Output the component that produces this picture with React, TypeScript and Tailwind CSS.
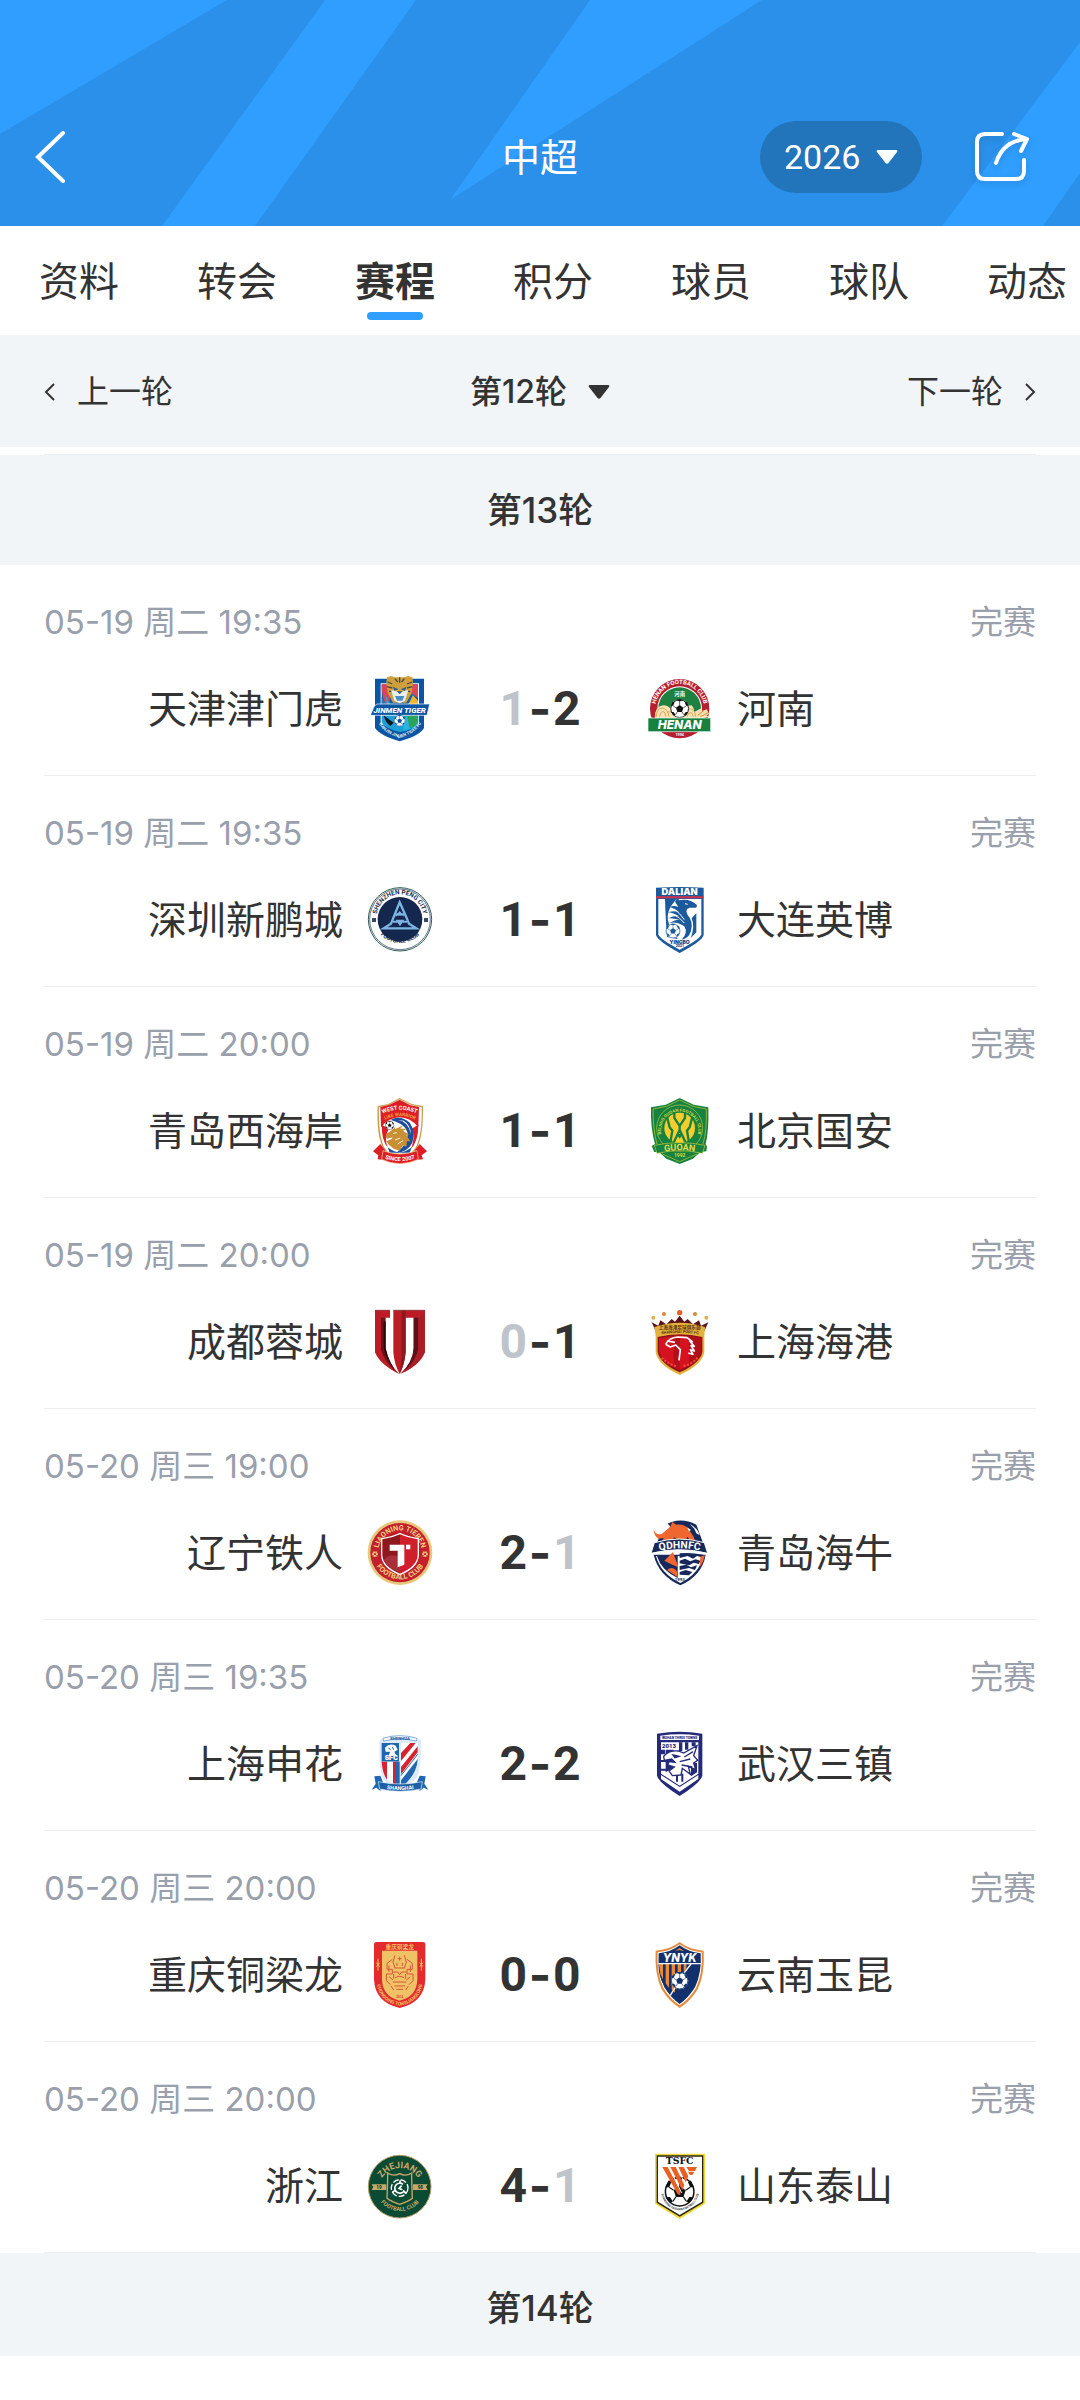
import React, { useId } from "react";

interface Match {
  id: number;
  date: string;
  status: string;
  home: string;
  away: string;
  homeScore: number;
  awayScore: number;
  homeCrest: React.ReactNode;
  awayCrest: React.ReactNode;
}

interface CrestProps {
  children: React.ReactNode;
}

interface ArcTextProps {
  d: string;
  size: number;
  fill: string;
  children: string;
}

const FONT = "font-['Inter','Noto_Sans_CJK_SC',sans-serif]";

/* ---------- crest helpers ---------- */

const Crest: React.FC<CrestProps> = ({ children }) => (
  <svg className="w-[66px] h-[66px] shrink-0" viewBox="0 0 198 198" aria-hidden="true">
    {children}
  </svg>
);

const ArcText: React.FC<ArcTextProps> = ({ d, size, fill, children }) => {
  const id = useId();
  return (
    <>
      <path id={id} d={d} fill="none" />
      <text fontSize={size} fill={fill} fontFamily="Roboto, sans-serif" fontWeight="700" textAnchor="middle">
        <textPath href={`#${id}`} startOffset="50%">
          {children}
        </textPath>
      </text>
    </>
  );
};

const Ball: React.FC<{ x: number; y: number; r: number; color?: string; base?: string }> = ({
  x,
  y,
  r,
  color = "#111",
  base = "#fff",
}) => (
  <g transform={`translate(${x} ${y}) scale(${r / 20})`}>
    <circle r="20" fill={base} />
    <circle r="19" fill="none" stroke={color} strokeWidth="2" />
    <path
      d="M0-8 8-2 5 7H-5L-8-2ZM-7-19 0-15 7-19 0-20ZM19-6 14-6 11-13 15-15ZM-19-6-14-6-11-13-15-15ZM13 15 9 13 13 7 18 7ZM-13 15-9 13-13 7-18 7Z"
      fill={color}
    />
    <path d="M0-8V-15M8-2 14-6M5 7 9 13M-5 7-9 13M-8-2-14-6" stroke={color} strokeWidth="1.5" />
  </g>
);

/* ---------- crests ---------- */

const TianjinCrest = () => (
  <Crest>
    <path d="M24 8H171V156Q160 178 98 196 38 178 24 156Z" fill="#0a56a5" />
    <path d="M41 22H156V146H41Z" fill="#fff" />
    <path d="M44 25H153V90H44Z" fill="#0f5fae" />
    <path d="M44 25H74L66 88H58Q44 70 44 25Z" fill="#d8455a" />
    <path d="M134 25H153V66L134 52Z" fill="#e0455a" />
    <path d="M54 44Q60 80 80 90H116Q136 76 138 48V90H60Z" fill="#2aa4de" />
    <path d="M138 58 153 74V90H122Z" fill="#f3b529" />
    <path d="M44 62 60 90H44Z" fill="#2473bb" />
    <path d="M44 118H154V148Q126 165 98 168 62 160 44 142Z" fill="#1ba0d8" />
    <path d="M50 118 80 140 70 150Q56 142 50 118Z" fill="#101820" />
    <path d="M112 118H153V146L116 162Z" fill="#2aa45d" />
    <path d="M120 118 128 158 112 164 104 140Z" fill="#25b4e4" />
    <path d="M60 4 72 0 84 4H112L124 0 136 4 138 18 134 52 118 80H78L62 50 58 18Z" fill="#cf9f3c" />
    <path
      d="M62 18 76 24M60 32 76 36M66 46 78 46M136 18 120 24M136 32 120 36M130 46 118 46M84 8 92 18M112 8 104 18M98 4V20"
      stroke="#4b4a3a"
      strokeWidth="4"
    />
    <path d="M72 42 88 46 98 54 108 46 124 42 114 74 98 82 82 74Z" fill="#e8f0f5" />
    <path d="M78 32 94 40 82 44ZM118 32 102 40 114 44ZM90 46H106L98 54Z" fill="#1f5fa4" />
    <path d="M84 60H112L106 74H90Z" fill="#4a8cc8" />
    <path d="M22 90 30 84H188L180 118H10Z" fill="#0a56a5" stroke="#fff" strokeWidth="2" />
    <text
      x="98"
      y="110"
      textAnchor="middle"
      fontFamily="Roboto, sans-serif"
      fontSize="24"
      fontWeight="800"
      fontStyle="italic"
      fill="#fff"
    >
      JINMEN TIGER
    </text>
    <Ball x={98} y={134} r={17} color="#0d4f92" />
    <ArcText d="M30 130Q40 168 98 186 156 168 168 130" size={13} fill="#dbe9f6">
      TIANJIN JINMEN TIGER FC
    </ArcText>
  </Crest>
);

const HenanCrest = () => (
  <Crest>
    <circle cx="98" cy="98" r="89" fill="#b5202f" />
    <circle cx="98" cy="98" r="67" fill="#fff" />
    <circle cx="98" cy="98" r="64" fill="#1d8240" />
    <ArcText d="M27 114A73 73 0 1 1 169 114" size={18} fill="#fff">
      HENAN FOOTBALL CLUB
    </ArcText>
    <text
      x="98"
      y="61"
      textAnchor="middle"
      fontFamily="'Noto Sans CJK SC', sans-serif"
      fontSize="16"
      fontWeight="700"
      fill="#fff"
    >
      河南
    </text>
    <path
      d="M24 126Q22 92 48 88 66 88 74 104 90 96 98 126ZM98 126Q104 88 134 88 142 96 142 108L164 96 162 106 180 100 184 112 192 108 178 120H190L172 126Z"
      fill="#f6e2b4"
    />
    <g fill="none" stroke="#d9a850" strokeWidth="3">
      <path d="M28 122Q28 98 46 96 62 98 66 122M38 122Q38 108 48 106 56 108 56 122M62 108Q80 104 86 122" />
      <path d="M108 122Q112 100 130 98 144 102 146 122M120 122Q122 110 132 110 138 112 138 122" />
      <path d="M152 118 170 104M160 122 184 110" stroke="#e58a2e" />
    </g>
    <Ball x={98} y={98} r={28} />
    <path d="M3 126H191V167H3Z" fill="#17803f" stroke="#fff" strokeWidth="2" />
    <text
      x="98"
      y="158"
      textAnchor="middle"
      fontFamily="Inter, sans-serif"
      fontSize="36"
      fontWeight="800"
      fontStyle="italic"
      fill="#fff"
    >
      HENAN
    </text>
    <text x="98" y="181" textAnchor="middle" fontFamily="Roboto, sans-serif" fontSize="11" fontWeight="700" fill="#fff">
      1994
    </text>
  </Crest>
);

const ShenzhenCrest = () => (
  <Crest>
    <circle cx="99" cy="97" r="95" fill="#fff" stroke="#2f5f55" strokeWidth="3" />
    <circle cx="99" cy="97" r="91" fill="none" stroke="#1a2d55" strokeWidth="2" />
    <circle cx="99" cy="97" r="67" fill="#14284f" />
    <ArcText d="M32 112A70 70 0 1 1 166 112" size={19} fill="#1a2d4f">
      SHENZHEN PENG CITY
    </ArcText>
    <ArcText d="M26 124A83 83 0 0 0 172 124" size={17} fill="#1a2d4f">
      FOOTBALL CLUB
    </ArcText>
    <path d="M15 93H27V105H15ZM171 93H183V105H171Z" fill="#3a4768" />
    <g fill="none" stroke="#7db4e2" strokeWidth="7">
      <path d="M76 100 98 46 122 100M76 100 72 110 50 124H148L126 110 122 100" />
      <path d="M84 82H112M78 104H92M106 104H120" strokeWidth="6" />
    </g>
    <path d="M84 88 98 72 112 88ZM86 98H112L99 118Z" fill="#7db4e2" />
    <path d="M90 88H108" stroke="#14284f" strokeWidth="4" />
  </Crest>
);

const DalianCrest = () => (
  <Crest>
    <path d="M27 2Q98-2 170 2V144Q166 162 98 198 32 162 27 144Z" fill="#1b5a9c" />
    <path d="M34 36H163V142Q158 158 98 188 40 158 34 142Z" fill="#fff" />
    <text
      x="98"
      y="24"
      textAnchor="middle"
      fontFamily="Inter, sans-serif"
      fontSize="28"
      fontWeight="900"
      fill="#fff"
    >
      DALIAN
    </text>
    <path d="M27 28H170V34H27Z" fill="#d6314a" />
    <path d="M54 36H88L70 60Q56 90 66 112 82 136 92 156L60 150Q56 100 54 36Z" fill="#1b5a9c" />
    <path
      d="M84 44 92 30 96 40Q128 34 150 54L148 62 128 62Q112 66 122 84 140 104 132 132 124 156 104 158 124 138 112 118 90 102 66 108 84 98 98 98 74 92 64 94 84 84 96 88 76 76 62 76 84 70 96 76 80 62 66 60 82 54 94 60Z"
      fill="#1b5a9c"
    />
    <path d="M114 50 122 52M82 66Q98 78 112 98M78 82Q98 90 112 108" stroke="#fff" strokeWidth="3" fill="none" />
    <path d="M148 78V136L132 152Q144 116 134 94Z" fill="#1b5a9c" />
    <Ball x={78} y={132} r={22} color="#1b5a9c" />
    <text x="98" y="170" textAnchor="middle" fontFamily="Inter, sans-serif" fontSize="15" fontWeight="900" fill="#1b3f7c">
      YINGBO
    </text>
    <text x="98" y="181" textAnchor="middle" fontFamily="Inter, sans-serif" fontSize="10" fontWeight="800" fill="#1b3f7c">
      2021
    </text>
  </Crest>
);

const WestCoastCrest = () => (
  <Crest>
    <path d="M98 0 134 18 168 24Q170 110 150 150 130 180 98 190 66 180 48 150 28 110 32 24L64 18Z" fill="#c9a04a" />
    <path d="M98 4 132 21 164 28Q166 108 147 147 128 175 98 185 68 175 51 147 34 108 36 28L66 21Z" fill="#fff" />
    <path d="M98 5 130 22 156 27 154 88Q130 58 98 58 66 58 42 88L40 27 66 21Z" fill="#dc1f26" />
    <ArcText d="M44 48Q98 22 152 48" size={17} fill="#fff">
      WEST COAST
    </ArcText>
    <ArcText d="M42 72Q98 36 156 72" size={14} fill="#f0a13a">
      LIKE WARRIOR
    </ArcText>
    <path d="M44 80Q44 128 62 148 50 118 66 92ZM154 80Q154 130 132 152 146 116 134 92Z" fill="#dc1f26" />
    <path d="M70 66Q100 50 128 74 146 98 136 134 122 162 88 164 122 140 122 108 118 78 70 66Z" fill="#1d4f9d" />
    <path d="M92 66Q124 70 132 108 130 80 110 68Z" fill="#fff" />
    <Ball x={68} y={82} r={13} />
    <path
      d="M58 108 72 98 86 86 84 94 108 82 100 92 120 92 108 98 126 110 118 112 130 130 120 130 118 146 108 142 98 158 80 152Q62 140 58 130L72 124 78 118 60 122 56 116Z"
      fill="#c98f35"
    />
    <path d="M78 106 90 104M84 126 100 120M92 138 108 128" stroke="#fff3d0" strokeWidth="3" />
    <path d="M62 148Q98 178 134 148L128 164H68Z" fill="#1d4f9d" />
    <path d="M18 160 40 138 54 156V186L32 184 34 172ZM180 160 158 138 144 156V186L168 184 164 172Z" fill="#dc1f26" />
    <path d="M48 158Q98 178 150 158L154 184Q98 210 44 184Z" fill="#dc1f26" stroke="#f5d6a0" strokeWidth="2" />
    <ArcText d="M48 180Q98 198 150 180" size={17} fill="#fff">
      SINCE 2007
    </ArcText>
  </Crest>
);

const GuoanCrest = () => (
  <Crest>
    <path
      d="M98 0 140 20 184 28Q186 100 176 138L180 146 178 160 160 162 138 182 98 198 58 182 36 162 22 162 14 144 24 138Q10 90 12 28L56 20Z"
      fill="#16823f"
    />
    <path
      d="M98 6 138 25 178 33Q180 96 168 138M98 6 58 25 18 33Q18 96 30 138M46 168 98 191 150 168"
      fill="none"
      stroke="#c9cf3a"
      strokeWidth="2"
    />
    <circle cx="98" cy="90" r="69" fill="none" stroke="#b9c840" strokeWidth="2" />
    <ArcText d="M44 112A56 56 0 1 1 152 112" size={13} fill="#d5d73a">
      BEIJING GUOAN FOOTBALL CLUB
    </ArcText>
    <circle cx="98" cy="90" r="46" fill="#f6cd2c" />
    <g fill="none" stroke="#16823f" strokeWidth="7">
      <path d="M82 42V60L98 84 114 60V42M98 84V96M98 96 78 138M98 96 118 138" />
      <path d="M60 56 68 88 76 98 70 134M136 56 128 88 120 98 126 134" />
    </g>
    <path d="M88 108H108L98 122Z" fill="#16823f" />
    <path d="M22 142Q98 126 174 142L166 166Q98 150 30 166Z" fill="#16823f" stroke="#c9cf3a" strokeWidth="2" />
    <ArcText d="M34 164Q98 150 162 164" size={27} fill="#e3df4a">
      GUOAN
    </ArcText>
    <text x="98" y="178" textAnchor="middle" fontFamily="Roboto, sans-serif" fontSize="15" fontWeight="700" fill="#d5d73a">
      1992
    </text>
  </Crest>
);

const ChengduCrest = () => (
  <Crest>
    <path d="M24 4H69V26H54V120Q64 164 96 195 38 166 24 130Z" fill="#bb1c26" />
    <path d="M42 26H56V118Q66 166 96 195 54 164 42 122Z" fill="#6c1318" />
    <path d="M50 40 56 36V118Q64 158 86 184 56 150 50 118Z" fill="#2c0a0b" />
    <path d="M79 4H174V130Q160 168 100 195 138 160 140 118V26H116V130Q112 170 98 195 82 168 79 130Z" fill="#bb1c26" />
    <path d="M104 4H116V130Q112 170 98 195 104 160 104 130Z" fill="#8e1820" />
    <path d="M140 26H154V122Q144 162 100 195 138 160 140 118Z" fill="#5c1116" />
    <path d="M154 26 172 8V130Q160 164 112 190 146 158 154 122Z" fill="#a81d26" />
    <path d="M24 4H69M79 4H174" stroke="#8c3a3e" strokeWidth="3" />
  </Crest>
);

const ShanghaiPortCrest = () => (
  <Crest>
    <circle cx="98" cy="11" r="8" fill="#e2602f" />
    <circle cx="51" cy="15" r="6" fill="#d9853a" />
    <circle cx="144" cy="15" r="6" fill="#d9853a" />
    <circle cx="19" cy="26" r="6" fill="#d8b34c" />
    <circle cx="178" cy="26" r="6" fill="#d8b34c" />
    <path
      d="M14 40 34 50 40 34 58 46 74 30 84 38 98 20 112 38 122 30 138 46 156 34 162 50 184 40 172 66H26Z"
      fill="#5a1218"
    />
    <path d="M22 54Q98 28 174 54L172 80V130Q166 168 98 198 32 168 26 130V80Z" fill="#e2b23d" />
    <path d="M32 84Q98 68 166 84V128Q160 162 98 190 38 162 32 128Z" fill="#8d0f18" />
    <path d="M36 88Q98 72 162 88V126Q156 158 98 184 42 158 36 126Z" fill="#d5121f" />
    <path d="M80 78H98V184L80 176ZM126 80 162 88V126Q158 148 126 170Z" fill="#b30f1b" />
    <text
      x="98"
      y="60"
      textAnchor="middle"
      fontFamily="'Noto Sans CJK SC', sans-serif"
      fontSize="14"
      fontWeight="700"
      fill="#5a2a12"
    >
      上海海港足球俱乐部
    </text>
    <ArcText d="M30 78Q98 66 168 78" size={12} fill="#5a2a12">
      SHANGHAI PORT FC
    </ArcText>
    <path
      d="M56 106Q66 86 92 84L120 86 136 98 128 96 142 112 132 110 142 126 130 122 138 136 124 132M56 106 70 114 86 108 100 122 96 154M60 96 84 100"
      fill="none"
      stroke="#fff"
      strokeWidth="5"
      strokeLinejoin="round"
    />
    <path d="M44 146Q62 166 90 172M152 146Q136 166 106 172" stroke="#f0453a" strokeWidth="6" strokeDasharray="7 4" fill="none" />
  </Crest>
);

const LiaoningCrest = () => (
  <Crest>
    <circle cx="99" cy="98" r="97" fill="#e8c67c" />
    <circle cx="99" cy="98" r="89" fill="#c3202b" />
    <circle cx="99" cy="98" r="61" fill="#b91c26" />
    <ArcText d="M36 112A65 65 0 1 1 162 112" size={22} fill="#f2cf85">
      LIAONING TIEREN
    </ArcText>
    <ArcText d="M20 118A82 82 0 0 0 178 118" size={22} fill="#f2cf85">
      FOOTBALL CLUB
    </ArcText>
    <Ball x={24} y={102} r={9} color="#c3202b" base="#f2cf85" />
    <Ball x={174} y={102} r={9} color="#c3202b" base="#f2cf85" />
    <path d="M99 38Q122 50 156 54V106Q154 144 99 166 44 144 42 106V54Q76 50 99 38Z" fill="#fff" />
    <path d="M99 43Q122 54 152 58V106Q150 140 99 161Z" fill="#cf1f2a" />
    <path d="M99 43Q76 54 46 58V106Q48 140 99 161Z" fill="#8e1820" />
    <path d="M50 120Q70 96 99 112V158Q60 144 50 120Z" fill="#a8303a" />
    <path d="M68 74H112V134L92 142V92H68ZM117 74H130V88H117Z" fill="#fff" />
  </Crest>
);

const HainiuCrest = () => (
  <Crest>
    <path d="M52 16Q98-12 148 14L168 68H30Z" fill="#16295a" />
    <path d="M34 30 60 8 70 20 60 36 40 50Z" fill="#fff" />
    <path
      d="M20 26Q24 46 44 42L70 20 76 6 88 14Q112 12 124 26L140 50 146 68H132L122 50 112 66H96L84 52 66 66H44L50 54 34 56Q20 46 20 26Z"
      fill="#f0662f"
    />
    <path d="M128 12Q152 24 158 46L148 40 142 26ZM120 22 132 30 126 34Z" fill="#fff" />
    <path d="M20 104H176Q166 166 100 196 34 166 20 104Z" fill="#16295a" />
    <path d="M27 108H169Q158 160 100 189 40 160 27 108Z" fill="#fff" />
    <path d="M30 108H92V174Q42 150 30 108Z" fill="#16295a" />
    <path d="M52 122 78 96 94 142 76 134ZM60 150Q76 136 90 154V170Z" fill="#f0662f" />
    <path
      d="M98 100Q130 96 168 104L164 112 150 108 138 116 122 108 98 114ZM98 122 114 116 130 124 146 118 160 122 156 132 140 128 126 136 98 130ZM98 138 118 134 132 142 150 136 144 150 126 144 98 150ZM98 156 116 150 136 156 126 166 98 164Z"
      fill="#16295a"
    />
    <path d="M160 110 174 106Q170 126 158 142Z" fill="#f0662f" />
    <path d="M22 68Q98 46 172 68L182 100Q98 78 12 100Z" fill="#16295a" stroke="#fff" strokeWidth="3" />
    <ArcText d="M20 96Q98 74 176 96" size={31} fill="#fff">
      QDHNFC
    </ArcText>
    <text x="98" y="182" textAnchor="middle" fontFamily="Roboto, sans-serif" fontSize="13" fontWeight="700" fill="#16295a">
      1993
    </text>
  </Crest>
);

const ShenhuaCrest = () => (
  <Crest>
    <path d="M38 28Q60 12 98 14 138 12 162 28 164 110 148 140 130 164 98 176 62 164 46 140 34 100 38 28Z" fill="#dcebf6" />
    <path d="M48 22Q98 6 150 22L148 30Q98 18 50 30Z" fill="#fff" stroke="#4d8fc8" strokeWidth="2" />
    <text x="99" y="27" textAnchor="middle" fontFamily="Roboto, sans-serif" fontSize="13" fontWeight="900" fill="#1d5fa8">
      SHENHUA
    </text>
    <path d="M44 36H96V92H44Z" fill="#2166b0" />
    <path d="M44 92H96V170Q48 152 44 92Z" fill="#fff" />
    <path d="M44 92H60V146Q46 126 44 92ZM78 92H96V170L78 160Z" fill="#d8232e" />
    <path d="M84 92H98V172L84 166Z" fill="#2166b0" />
    <path d="M102 36H152V70Q152 132 102 170Z" fill="#fff" />
    <path d="M102 66 130 36H146L102 90ZM102 108 152 46V64L102 130Z" fill="#d8232e" />
    <path d="M102 148 152 84Q150 132 102 170Z" fill="#2166b0" />
    <path d="M102 134 152 70" stroke="#2166b0" strokeWidth="3" />
    <path d="M54 50Q68 34 86 44L92 56 82 62 88 74H64L70 62 56 62Z" fill="#fff" />
    <path d="M64 50 72 58M76 48 80 56" stroke="#2166b0" strokeWidth="3" />
    <text x="73" y="88" textAnchor="middle" fontFamily="Inter, sans-serif" fontSize="20" fontWeight="900" fill="#fff">
      SFC
    </text>
    <path d="M22 136 40 134 48 154 40 180 28 170 14 176 26 158ZM176 136 158 134 150 154 158 180 170 170 184 176 172 158Z" fill="#2166b0" />
    <path d="M34 152Q98 166 166 152L162 174Q98 188 38 174Z" fill="#1d5fa8" stroke="#e3effa" strokeWidth="2" />
    <ArcText d="M40 170Q98 184 160 170" size={16} fill="#fff">
      SHANGHAI
    </ArcText>
  </Crest>
);

const WuhanCrest = () => (
  <Crest>
    <path d="M30 8Q98-4 166 8V134Q160 156 98 195 36 156 30 134Z" fill="#252a78" />
    <path d="M40 14Q98 6 156 14V27H40Z" fill="#fff" />
    <text x="98" y="24" textAnchor="middle" fontFamily="Roboto, sans-serif" fontSize="10" fontWeight="900" fill="#252a78">
      WUHAN THREE TOWNS
    </text>
    <path d="M42 34H154V128L98 164 42 128Z" fill="#fff" />
    <path d="M42 56H54V70H42ZM56 56H80V110L56 124ZM96 34H106V60H96ZM114 34H124V56H114ZM134 34H146V46H134ZM132 96H150V124L132 136Z" fill="#252a78" />
    <path d="M42 90H60M42 116H60M90 128V152M106 128V152" stroke="#252a78" strokeWidth="6" />
    <path
      d="M50 76Q64 58 94 60L110 66 150 44 140 74 152 88 140 96 146 116 124 106 130 130 106 112 102 132 76 134 66 120 82 108 62 102 66 92 84 94 74 84 52 88Z"
      fill="#fff"
      stroke="#252a78"
      strokeWidth="4"
    />
    <path d="M78 72 96 76 84 80ZM98 92 130 84M104 102 136 108M112 78 138 62" stroke="#252a78" strokeWidth="4" fill="#252a78" />
    <path d="M42 132 98 168 154 132V144L98 182 42 144Z" fill="#fff" />
    <text x="66" y="51" textAnchor="middle" fontFamily="Roboto, sans-serif" fontSize="18" fontWeight="900" fill="#252a78">
      2013
    </text>
  </Crest>
);

const ChongqingCrest = () => (
  <Crest>
    <path d="M28 0H168Q175 0 175 8V112Q172 182 98 198 24 182 21 112V8Q21 0 28 0Z" fill="#e32b2e" />
    <path d="M45 26H151V112Q150 164 98 176 46 164 45 112Z" fill="#f1c265" />
    <text
      x="98"
      y="20"
      textAnchor="middle"
      fontFamily="'Noto Sans CJK SC', sans-serif"
      fontSize="17"
      fontWeight="700"
      fill="#f1c265"
    >
      重庆铜梁龙
    </text>
    <ArcText d="M28 112Q32 180 98 191 164 180 168 112" size={14} fill="#f1c265">
      CHONGQING TONGLIANGLONG
    </ArcText>
    <path d="M33 50V86M28 62 38 74M38 62 28 74M163 50V86M158 62 168 74M168 62 158 74" stroke="#f1c265" strokeWidth="3" />
    <g fill="none" stroke="#d4573a" strokeWidth="3">
      <path d="M84 40 78 60 84 78M112 40 118 60 112 78M98 44V56M92 50H104M76 52 60 64V82H76V96H58V116L70 128M120 52 136 64V82H120V96H138V116L126 128" />
      <path d="M82 78H114M78 90H92L98 98 104 90H118M84 108Q98 98 112 108M78 120H118M82 132H114M88 142H108M80 96V110M116 96V110" />
      <path d="M66 104 78 114M130 104 118 114M72 132 80 144M124 132 116 144M66 70V90M130 70V90M90 62V72M106 62V72" />
    </g>
    <text x="98" y="168" textAnchor="middle" fontFamily="Roboto, sans-serif" fontSize="9" fontWeight="700" fill="#cf4a34">
      2014
    </text>
  </Crest>
);

const YunnanCrest = () => (
  <Crest>
    <path d="M98 0Q124 22 170 26 174 96 152 142 130 178 98 198 66 178 44 142 22 96 26 26 72 22 98 0Z" fill="#e58a3a" />
    <path d="M98 7Q124 27 164 31 168 94 147 138 126 172 98 190 70 172 49 138 28 94 32 31 72 27 98 7Z" fill="#fff" />
    <path d="M98 10Q124 30 161 34 165 92 144 136 124 168 98 186 72 168 52 136 31 92 35 34 72 30 98 10Z" fill="#12306c" />
    <path d="M84 26 98 18 112 28 98 24Z" fill="#e58a3a" />
    <path d="M35 66H132L120 84 84 158 72 154Q32 116 35 66Z" fill="#12306c" />
    <path d="M36 66H48V112L40 96ZM56 66H66V138L56 124ZM74 66H84V152L74 142ZM92 66H102V92L92 96ZM110 66H118V80L110 90Z" fill="#ea8a35" />
    <path d="M34 65H162M132 66 112 92M86 134 70 160" stroke="#fff" strokeWidth="4" />
    <Ball x={98} y={116} r={26} color="#12306c" />
    <text
      x="98"
      y="60"
      textAnchor="middle"
      fontFamily="Inter, sans-serif"
      fontSize="34"
      fontWeight="800"
      fontStyle="italic"
      fill="#fff"
    >
      YNYK
    </text>
  </Crest>
);

const ZhejiangCrest = () => (
  <Crest>
    <circle cx="98" cy="101" r="94" fill="#0b4a33" stroke="#b59a62" strokeWidth="3" />
    <ArcText d="M42 80A64 64 0 0 1 156 80" size={27} fill="#c9a86a">
      ZHEJIANG
    </ArcText>
    <ArcText d="M32 134A76 76 0 0 0 166 134" size={17} fill="#c9a86a">
      FOOTBALL CLUB
    </ArcText>
    <path d="M14 94H58V111H14L19 102ZM182 94H138V111H182L177 102Z" fill="#c9a86a" />
    <text x="36" y="108" textAnchor="middle" fontFamily="Roboto, sans-serif" fontSize="14" fontWeight="900" fill="#0b4a33">
      19
    </text>
    <text x="160" y="108" textAnchor="middle" fontFamily="Roboto, sans-serif" fontSize="14" fontWeight="900" fill="#0b4a33">
      98
    </text>
    <path
      d="M62 60Q80 72 98 62 116 72 134 60 134 100 136 136 124 146 98 154 72 146 60 136 62 100 62 60Z"
      fill="#0b4a33"
      stroke="#c9a86a"
      strokeWidth="4"
    />
    <circle cx="98" cy="105" r="25" fill="none" stroke="#fff" strokeWidth="4" strokeDasharray="18 6" />
    <path d="M108 94A15 15 0 1 0 112 112M104 98 96 106 106 110M98 90 100 82M84 112 76 118M112 116 118 122" stroke="#fff" strokeWidth="5" fill="none" />
  </Crest>
);

const ShandongCrest = () => (
  <Crest>
    <path d="M24 2H174V152L98 198 24 152Z" fill="#f0da35" />
    <path d="M29 7H169V149L98 191 29 149Z" fill="#2a2416" />
    <path d="M33 11H165V146L98 186 33 146Z" fill="#fff" />
    <text
      x="98"
      y="34"
      textAnchor="middle"
      fontFamily="'DejaVu Serif', serif"
      fontSize="28"
      fontWeight="700"
      fill="#111"
    >
      TSFC
    </text>
    <Ball x={98} y={116} r={45} />
    <path
      d="M46 42H62L100 114V126L92 124ZM70 42H86L112 96 106 112ZM94 42H110L124 70 116 88ZM118 42H150L144 54H126ZM122 56H142L136 66H128Z"
      fill="#ea5f24"
    />
    <path d="M66 42 104 120M90 42 114 92M114 42 130 72" stroke="#fff" strokeWidth="3" />
    <ArcText d="M40 112Q50 168 98 172 146 168 158 112" size={9} fill="#333">
      SHANDONG TAISHAN FOOTBALL CLUB
    </ArcText>
  </Crest>
);

/* ---------- data ---------- */

const tabs = ["资料", "转会", "赛程", "积分", "球员", "球队", "动态"];
const seasons = ["2026", "2025", "2024"];
const rounds = Array.from({ length: 30 }, (_, i) => i + 1);

const matches: Match[] = [
  { id: 1, date: "05-19 周二 19:35", status: "完赛", home: "天津津门虎", away: "河南", homeScore: 1, awayScore: 2, homeCrest: <TianjinCrest />, awayCrest: <HenanCrest /> },
  { id: 2, date: "05-19 周二 19:35", status: "完赛", home: "深圳新鹏城", away: "大连英博", homeScore: 1, awayScore: 1, homeCrest: <ShenzhenCrest />, awayCrest: <DalianCrest /> },
  { id: 3, date: "05-19 周二 20:00", status: "完赛", home: "青岛西海岸", away: "北京国安", homeScore: 1, awayScore: 1, homeCrest: <WestCoastCrest />, awayCrest: <GuoanCrest /> },
  { id: 4, date: "05-19 周二 20:00", status: "完赛", home: "成都蓉城", away: "上海海港", homeScore: 0, awayScore: 1, homeCrest: <ChengduCrest />, awayCrest: <ShanghaiPortCrest /> },
  { id: 5, date: "05-20 周三 19:00", status: "完赛", home: "辽宁铁人", away: "青岛海牛", homeScore: 2, awayScore: 1, homeCrest: <LiaoningCrest />, awayCrest: <HainiuCrest /> },
  { id: 6, date: "05-20 周三 19:35", status: "完赛", home: "上海申花", away: "武汉三镇", homeScore: 2, awayScore: 2, homeCrest: <ShenhuaCrest />, awayCrest: <WuhanCrest /> },
  { id: 7, date: "05-20 周三 20:00", status: "完赛", home: "重庆铜梁龙", away: "云南玉昆", homeScore: 0, awayScore: 0, homeCrest: <ChongqingCrest />, awayCrest: <YunnanCrest /> },
  { id: 8, date: "05-20 周三 20:00", status: "完赛", home: "浙江", away: "山东泰山", homeScore: 4, awayScore: 1, homeCrest: <ZhejiangCrest />, awayCrest: <ShandongCrest /> },
];

/* ---------- page parts ---------- */

const Caret: React.FC<{ className?: string }> = ({ className = "" }) => (
  <svg className={`w-[22px] h-[14px] ${className}`} viewBox="0 0 22 14" fill="currentColor" aria-hidden="true">
    <path d="M2 0H20Q22 0 21 2L12.500 13Q11 14.500 9.500 13L1 2Q0 0 2 0Z" />
  </svg>
);

const Header = () => (
  <header className="relative bg-[#2b90ea] pt-[88px] overflow-hidden text-white">
    <svg
      className="absolute inset-0 w-full h-full"
      viewBox="0 0 1080 226"
      preserveAspectRatio="none"
      fill="#2f9eff"
      aria-hidden="true"
    >
      <path d="M0 0H227L0 134ZM325 0H416L255 226H162ZM590 0H762L450 200ZM1080 42V173L1043 226H942Z" />
    </svg>
    <div className="relative grid grid-cols-[1fr_auto_1fr] items-center h-[138px] px-[50px]">
      <button className="justify-self-start -ml-[18px]" aria-label="返回">
        <svg className="w-9 h-14" viewBox="0 0 36 56" fill="none" stroke="currentColor" strokeWidth="4" aria-hidden="true">
          <path d="M31 4 6 28 31 52" strokeLinecap="round" />
        </svg>
      </button>
      <h1 className="text-[38px] leading-[48px]">中超</h1>
      <div className="justify-self-end flex items-center gap-[52px]">
        <div className="relative">
          <select
            aria-label="赛季"
            defaultValue="2026"
            className="appearance-none w-[162px] h-[72px] pl-6 rounded-full bg-[#2274bb] font-['Roboto',sans-serif] text-[34px] text-white"
          >
            {seasons.map((season) => (
              <option key={season}>{season}</option>
            ))}
          </select>
          <Caret className="absolute right-6 top-[29px] pointer-events-none" />
        </div>
        <button aria-label="分享">
          <svg
            className="w-14 h-14 drop-shadow-md"
            viewBox="0 0 56 56"
            fill="none"
            stroke="currentColor"
            strokeWidth="4"
            strokeLinecap="round"
            strokeLinejoin="round"
            aria-hidden="true"
          >
            <path d="M28 5H11Q3 5 3 13V42Q3 50 11 50H42Q50 50 50 42V31" />
            <path d="M22 34Q29 12 52 10M40 5 53 10 47 22" />
          </svg>
        </button>
      </div>
    </div>
  </header>
);

const Tabs = () => (
  <nav className="flex gap-[78px] h-[110px] pl-[39px] bg-white overflow-hidden border-b border-gray-100">
    {tabs.map((tab) => {
      const active = tab === "赛程";
      return (
        <a
          key={tab}
          href="#"
          aria-current={active ? "page" : undefined}
          className={`flex flex-col items-center shrink-0 pt-7 text-[40px] leading-[56px] ${
            active ? "font-bold" : ""
          }`}
        >
          {tab}
          {active && <span className="w-14 h-2 mt-0.5 rounded-full bg-[#2f9eff]" />}
        </a>
      );
    })}
  </nav>
);

const RoundPicker = () => (
  <div className="grid grid-cols-[1fr_auto_1fr] items-center h-[111px] px-11 bg-[#f2f5f8] text-[32px]">
    <button className="justify-self-start flex items-center gap-[22px]">
      <svg className="w-[11px] h-[18px]" viewBox="0 0 11 18" fill="none" stroke="currentColor" strokeWidth="2" aria-hidden="true">
        <path d="M10 1 2 9 10 17" />
      </svg>
      上一轮
    </button>
    <div className="relative">
      <select aria-label="轮次" defaultValue="12" className="appearance-none w-[140px] h-12 font-medium">
        {rounds.map((round) => (
          <option key={round} value={round}>
            第{round}轮
          </option>
        ))}
      </select>
      <Caret className="absolute right-0 top-[17px] pointer-events-none" />
    </div>
    <button className="justify-self-end flex items-center gap-[22px]">
      下一轮
      <svg className="w-[11px] h-[18px]" viewBox="0 0 11 18" fill="none" stroke="currentColor" strokeWidth="2" aria-hidden="true">
        <path d="M1 1 9 9 1 17" />
      </svg>
    </button>
  </div>
);

const RoundTitle: React.FC<{ round: number }> = ({ round }) => (
  <h2 className="flex items-center justify-center h-[110px] bg-[#f2f5f8] text-[35px] font-medium">第{round}轮</h2>
);

const MatchRow: React.FC<{ match: Match }> = ({ match }) => {
  const { date, status, home, away, homeScore, awayScore, homeCrest, awayCrest } = match;
  return (
    <li className="mx-11 pt-[34px] pb-[33px] border-b border-[#eceef0]">
      <div className="flex items-center justify-between text-[33px] leading-[46px] text-[#9a9fac]">
        <time>{date}</time>
        <span>{status}</span>
      </div>
      <div className="grid grid-cols-[1fr_214px_1fr] items-center mt-[31px] text-[39px] leading-[56px]">
        <div className="flex items-center justify-end gap-6">
          {home}
          {homeCrest}
        </div>
        <div className="grid grid-cols-[1fr_26px_1fr] font-['Roboto',sans-serif] text-[48px] font-bold text-center">
          <span className={`text-right ${homeScore < awayScore ? "text-[#bfc4cb]" : ""}`}>{homeScore}</span>
          <span className="flex justify-center font-['Inter',sans-serif]">-</span>
          <span className={`text-left ${awayScore < homeScore ? "text-[#bfc4cb]" : ""}`}>{awayScore}</span>
        </div>
        <div className="flex items-center gap-6">
          {awayCrest}
          {away}
        </div>
      </div>
    </li>
  );
};

export default function App() {
  return (
    <div className={`min-h-screen bg-white text-[#333] ${FONT}`}>
      <Header />
      <Tabs />
      <RoundPicker />
      <main>
        <div className="h-2 mx-11 border-b border-[#eceef0]" />
        <RoundTitle round={13} />
        <ul>
          {matches.map((match) => (
            <MatchRow key={match.id} match={match} />
          ))}
        </ul>
        <RoundTitle round={14} />
      </main>
      <div className="fixed bottom-0 inset-x-0 h-11 bg-white" />
    </div>
  );
}
